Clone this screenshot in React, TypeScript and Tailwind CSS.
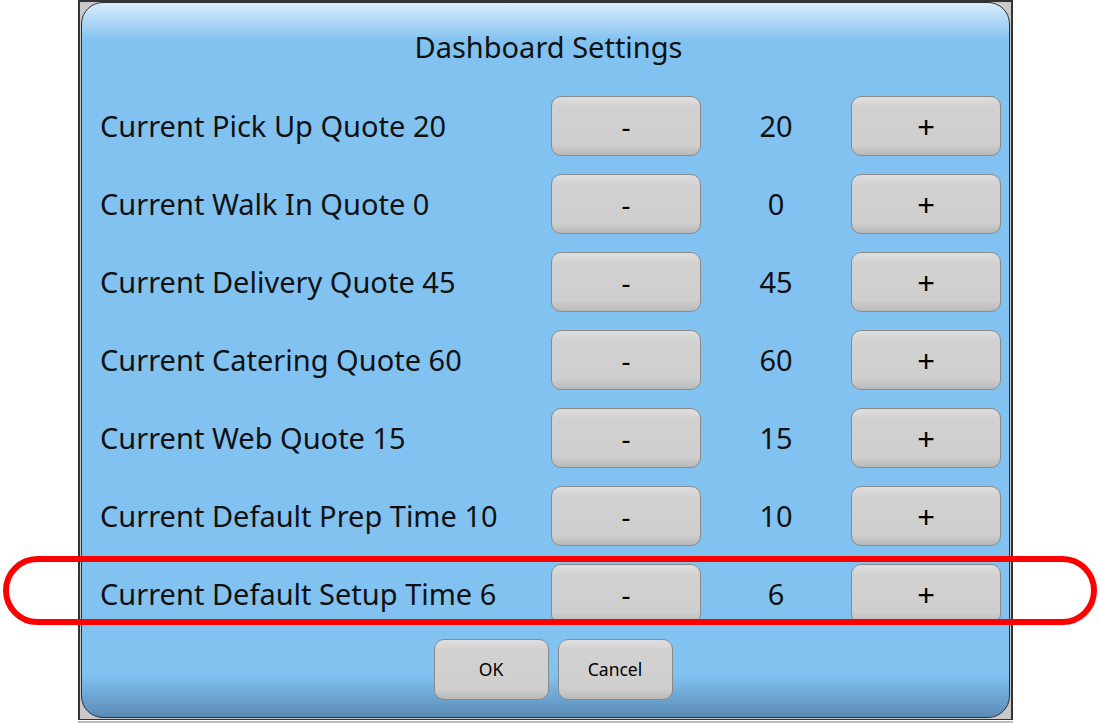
import React from 'react'

const rows = [
  { label: 'Current Pick Up Quote', value: 20 },
  { label: 'Current Walk In Quote', value: 0 },
  { label: 'Current Delivery Quote', value: 45 },
  { label: 'Current Catering Quote', value: 60 },
  { label: 'Current Web Quote', value: 15 },
  { label: 'Current Default Prep Time', value: 10 },
  { label: 'Current Default Setup Time', value: 6 },
]

const btn =
  'flex items-center justify-center rounded-[10px] border border-[#8a8a8a] bg-[linear-gradient(to_bottom,#dedede,#d1d1d1_18%,#cfcfcf_82%,#b9b9b9)] text-black'

export default function App() {
  return (
    <div className="relative w-[1100px] h-[723px] bg-white overflow-hidden font-['Noto_Sans',sans-serif]">
      <div className="ml-[78px] w-[935px] h-[720px] bg-[#c9c9c9] border-x-2 border-t-2 border-b border-[#333]">
        <div className="ml-px w-[929px] h-[716px] rounded-[22px] border border-[#2e2e2e] bg-[linear-gradient(to_bottom,#d8ebfa_0px,#82c2f1_38px,#82c2f1_calc(100%-42px),#5a8bb4_100%)] flex flex-col">
          <div className="h-[93px] flex justify-center pt-[24px] pl-[6px]">
            <span className="text-[29px] leading-[40px] text-[#111]">Dashboard Settings</span>
          </div>
          <div className="flex flex-col gap-[18px]">
            {rows.map((r) => (
              <div key={r.label} className="h-[60px] flex items-center pr-[8px]">
                <div className="flex-1 pl-[18px] text-[29px] text-[#111] whitespace-nowrap">
                  {r.label} {r.value}
                </div>
                <button className={`${btn} w-[150px] h-[60px] text-[28px]`}>-</button>
                <div className="w-[150px] text-center text-[29px] text-[#111]">{r.value}</div>
                <button className={`${btn} w-[150px] h-[60px] text-[31px]`}>+</button>
              </div>
            ))}
          </div>
          <div className="mt-[15px] flex justify-center gap-[9px] pl-[15px]">
            <button className={`${btn} w-[115px] h-[61px] text-[17.5px] text-[#2a2a2a]`}>OK</button>
            <button className={`${btn} w-[115px] h-[61px] text-[17.5px] text-[#2a2a2a]`}>Cancel</button>
          </div>
        </div>
      </div>
      <div className="ml-[78px] w-[935px] h-[2px] bg-[#bdbdbd] mt-px" />
      <div className="absolute left-[3px] top-[556px] w-[1094px] h-[69px] rounded-full border-[6px] border-[#ff0000]" />
    </div>
  )
}
